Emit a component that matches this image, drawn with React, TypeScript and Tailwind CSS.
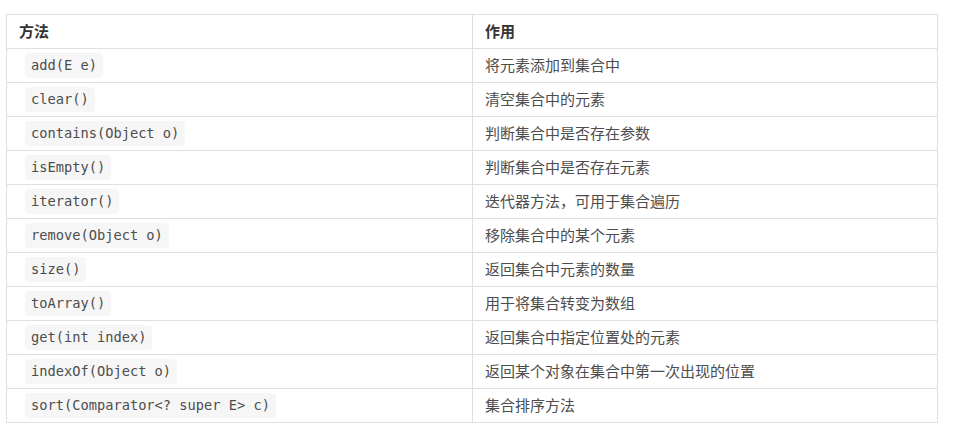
const rows: [string, string][] = [
  ['add(E e)', '将元素添加到集合中'],
  ['clear()', '清空集合中的元素'],
  ['contains(Object o)', '判断集合中是否存在参数'],
  ['isEmpty()', '判断集合中是否存在元素'],
  ['iterator()', '迭代器方法，可用于集合遍历'],
  ['remove(Object o)', '移除集合中的某个元素'],
  ['size()', '返回集合中元素的数量'],
  ['toArray()', '用于将集合转变为数组'],
  ['get(int index)', '返回集合中指定位置处的元素'],
  ['indexOf(Object o)', '返回某个对象在集合中第一次出现的位置'],
  ['sort(Comparator<? super E> c)', '集合排序方法'],
]

const cellClassName = 'h-[34px] border border-[#dfdfdf] px-3 py-0 align-middle'

export default function App() {
  return (
    <div className="h-[435px] w-[954px] bg-white pl-[6px] pt-[14px] font-['Noto_Sans_CJK_SC',sans-serif] text-[15px] text-[#4d4d4d]">
      <table className="w-[932px] table-fixed border-collapse">
        <thead>
          <tr>
            <th className={`${cellClassName} w-[466px] text-left font-bold text-[#333]`}>方法</th>
            <th className={`${cellClassName} text-left font-bold text-[#333]`}>作用</th>
          </tr>
        </thead>
        <tbody>
          {rows.map(([method, desc]) => (
            <tr key={method}>
              <td className={cellClassName}>
                <code className="ml-[6px] inline-block rounded-[4px] bg-[#f6f6f6] px-[6px] py-[2px] font-['DejaVu_Sans_Mono',monospace] text-[13.7px] leading-[21px] text-[#4d4d4d]">
                  {method}
                </code>
              </td>
              <td className={cellClassName}>{desc}</td>
            </tr>
          ))}
        </tbody>
      </table>
    </div>
  )
}
